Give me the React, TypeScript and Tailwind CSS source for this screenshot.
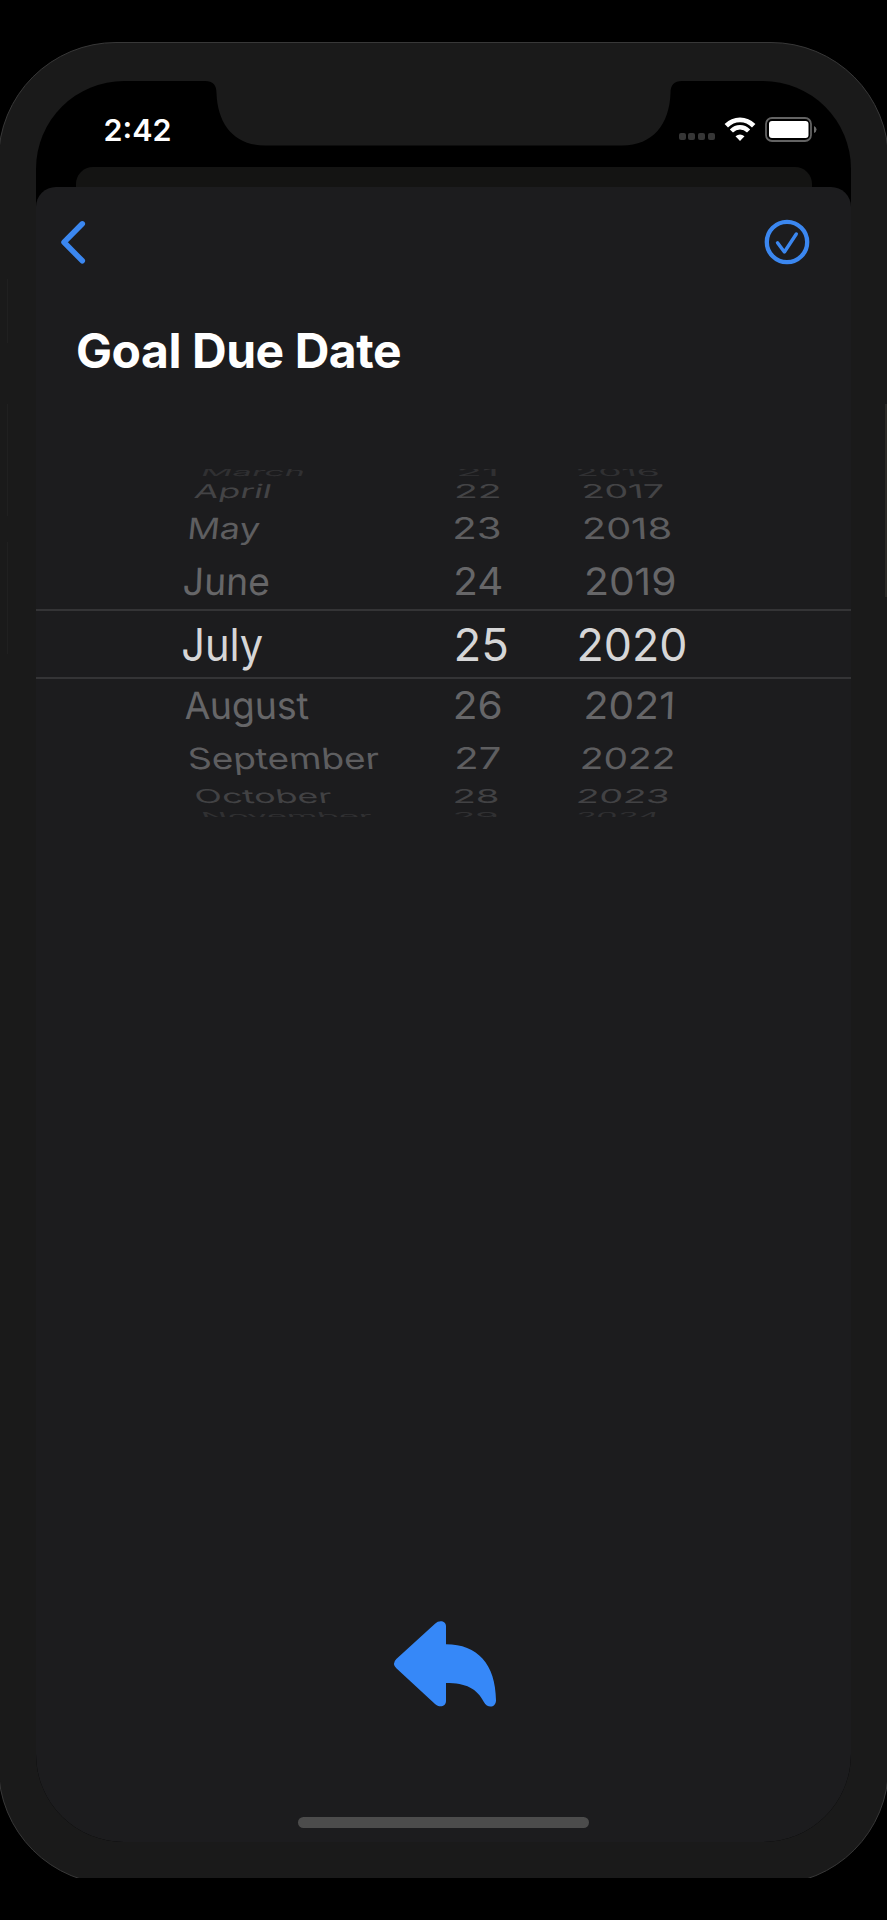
import { useMemo } from "react";

type Cell = { text: string; x: number; w: number; skew: number };
type Row = { row: string; cap: number; color: string; dy: number; cells: [Cell, Cell, Cell] };

const c = (text: string, x: number, w: number, skew = 0): Cell => ({ text, x, w, skew });

const FONT_SIZE = 45;
const LINE = 33;
const COLUMNS = [180, 455, 577];

const ROWS: Row[] = [
  { row: "h-[10px]", cap: 8, color: "text-[#303032]", dy: -3, cells: [c("March", 202, 103, -22), c("21", 459, 37), c("2016", 577, 82, 14)] },
  { row: "h-[24px]", cap: 14, color: "text-[#444446]", dy: -0.7, cells: [c("April", 194, 77, -13), c("22", 456.5, 43), c("2017", 583, 81.5, 7)] },
  { row: "h-[51px]", cap: 21.5, color: "text-[#5e5e60]", dy: 0, cells: [c("May", 189, 72, -6), c("23", 455, 45), c("2018", 584, 87, 3)] },
  { row: "h-[55px]", cap: 27.5, color: "text-[#666668]", dy: 0, cells: [c("June", 184, 85.5, -2), c("24", 456, 45.5), c("2019", 586.5, 88.5, 1)] },
  { row: "h-[70px] border-y-2 border-[#343436]", cap: 33, color: "text-[#d6d6d7]", dy: -0.5, cells: [c("July", 183, 80), c("25", 456.5, 50), c("2020", 579.5, 105.5)] },
  { row: "h-[52px]", cap: 27.5, color: "text-[#666668]", dy: 0, cells: [c("August", 184.5, 124, 2), c("26", 455.5, 45.5), c("2021", 586, 87, -2)] },
  { row: "h-[54px]", cap: 21.5, color: "text-[#5e5e60]", dy: 0, cells: [c("September", 188.5, 191, 5), c("27", 457, 43), c("2022", 582, 92, -3)] },
  { row: "h-[22px]", cap: 14, color: "text-[#424244]", dy: -0.7, cells: [c("October", 195, 137, 9), c("28", 455, 43), c("2023", 578, 91, -7)] },
  { row: "h-[10px]", cap: 8, color: "text-[#303032]", dy: 3, cells: [c("November", 202, 171, 22), c("29", 455, 42), c("2024", 577, 82, -14)] },
];

function measureInk(text: string) {
  const ctx = document.createElement("canvas").getContext("2d")!;
  ctx.font = `400 ${FONT_SIZE}px Inter, sans-serif`;
  const m = ctx.measureText(text);
  return { left: -m.actualBoundingBoxLeft, width: m.actualBoundingBoxRight + m.actualBoundingBoxLeft };
}

function WheelCell({ cell, column, cap, dy }: { cell: Cell; column: number; cap: number; dy: number }) {
  const transform = useMemo(() => {
    const ink = measureInk(cell.text);
    const lean = Math.abs(Math.tan((cell.skew * Math.PI) / 180)) * cap;
    const sx = (cell.w - lean) / ink.width;
    const tx = cell.x - COLUMNS[column] - ink.left * sx + lean / 2;
    return `translate(${tx}px, ${dy}px) skewX(${cell.skew}deg) scale(${sx}, ${cap / LINE})`;
  }, [cell, column, cap, dy]);
  return (
    <span className="block w-max origin-left whitespace-nowrap text-[45px] leading-[33px]" style={{ transform }}>
      {cell.text}
    </span>
  );
}

function DateWheel() {
  return (
    <div className="mt-[74px] flex h-[348px] flex-col overflow-hidden">
      {ROWS.map((r) => (
        <div
          key={r.cells[0].text}
          className={`grid shrink-0 grid-cols-[275px_122px_1fr] items-center pl-[144px] ${r.row} ${r.color}`}
        >
          {r.cells.map((cell, i) => (
            <div key={i} className="flex h-0 items-center">
              <WheelCell cell={cell} column={i} cap={r.cap} dy={r.dy} />
            </div>
          ))}
        </div>
      ))}
    </div>
  );
}

function StatusBar() {
  return (
    <div className="relative flex h-[86px] items-start">
      <svg className="absolute left-[169px] top-0" width="477" height="65" viewBox="0 0 477 65" fill="#1a1a1a">
        <path d="M0 -1V0C8 0 11.500 4 11.500 12C12.500 43 29 64.500 60 64.500H417C448 64.500 464.500 43 465.500 12C465.500 4 469 0 477 0V-1Z" />
      </svg>
      <div className="ml-[67.500px] mt-[30.500px] text-[30.500px] font-semibold leading-[36px] text-white">2:42</div>
      <div className="ml-auto mr-[33px] mt-[36px] flex h-[25px] items-start">
        <div className="mr-[9px] mt-[16px] flex gap-[2.800px]">
          <i className="block size-[7px] rounded-[2px] bg-[#363636]" />
          <i className="block size-[7px] rounded-[2px] bg-[#363636]" />
          <i className="block size-[7px] rounded-[2px] bg-[#363636]" />
          <i className="block size-[7px] rounded-[2px] bg-[#363636]" />
        </div>
        <svg className="mr-[9px]" width="32" height="25" viewBox="0 0 32 25" fill="none" stroke="#fff">
          <path d="M2.300 8.800C10 1 22 1 29.700 8.800" strokeWidth="4.800" />
          <path d="M7.400 14C12.500 9 19.500 9 24.600 14" strokeWidth="4.500" />
          <path d="M11.500 19.300Q16 15.500 20.500 19.300L16 24Z" fill="#fff" stroke="none" />
        </svg>
        <svg width="53" height="25" viewBox="0 0 53 25">
          <rect x="1" y="1" width="45" height="23" rx="6" fill="none" stroke="#636363" strokeWidth="1.800" />
          <rect x="4" y="4" width="39.500" height="17" rx="3" fill="#fff" />
          <path d="M49 9Q51.500 10 51.500 12.500T49 16Z" fill="#6b6b6b" />
        </svg>
      </div>
    </div>
  );
}

export default function App() {
  return (
    <div className="h-[1920px] w-[887px] overflow-hidden bg-black pt-[42px] font-['Inter',sans-serif]">
      <div className="h-[1836px] overflow-hidden">
        <div className="relative -ml-[2px] h-[1843px] w-[891px] rounded-[118px] border-[1.500px] border-[#383838] bg-[#1a1a1a] pl-[37px] pt-[38px]">
          <i className="absolute left-[8px] top-[236px] h-[64px] w-px bg-[#202020]" />
          <i className="absolute left-[8px] top-[361px] h-[112px] w-px bg-[#202020]" />
          <i className="absolute left-[8px] top-[499px] h-[112px] w-px bg-[#202020]" />
          <i className="absolute right-px top-[361px] h-[193px] w-[2px] bg-[#2b2a27]" />
          <div className="flex h-[1761px] w-[815px] flex-col overflow-hidden rounded-[88px] bg-black">
            <StatusBar />
            <div className="mx-[39.500px] -mb-px h-[21px] shrink-0 rounded-t-[17px] bg-[#141413]" />
            <main className="flex min-h-0 flex-1 flex-col rounded-t-[20px] bg-[#1c1c1e]">
              <header className="flex h-[109px] items-center justify-between pl-[23px] pr-[40.500px]">
                <svg width="28" height="46" viewBox="0 0 28 46" fill="none" stroke="#3b87f0" strokeWidth="5.500" strokeLinecap="round" strokeLinejoin="round">
                  <path d="M23.300 4.800L5 23.300L23.300 41.800" />
                </svg>
                <svg width="48" height="48" viewBox="0 0 48 48" fill="none" stroke="#3b87f0" strokeLinecap="round" strokeLinejoin="round">
                  <circle cx="24" cy="24" r="20.200" strokeWidth="4.300" />
                  <path d="M14.500 24.800L21.400 34L33.300 16" strokeWidth="3.400" />
                </svg>
              </header>
              <h1 className="ml-[40px] mt-[25px] h-[60px] whitespace-nowrap text-[48px] font-bold leading-[60px] tracking-[-0.450px] text-white">Goal Due Date</h1>
              <div className="mt-[14px]">
                <DateWheel />
              </div>
              <div className="mt-auto flex flex-col items-center pb-[14.500px]">
                <svg className="mb-[86px] ml-[4px]" width="150" height="130" viewBox="0 0 450 390" fill="#3688f8">
                  <path d="M225 75V130C320 130 374 190 375 298C375 322 348 322 339 304C318 262 285 246 225 246V300C225 317 205 321 192 309L76 202Q62 188 76 174L192 68C205 55 225 60 225 75Z" />
                </svg>
                <div className="h-[10.500px] w-[291px] rounded-full bg-[#4c4c4c]" />
              </div>
            </main>
          </div>
        </div>
      </div>
    </div>
  );
}
